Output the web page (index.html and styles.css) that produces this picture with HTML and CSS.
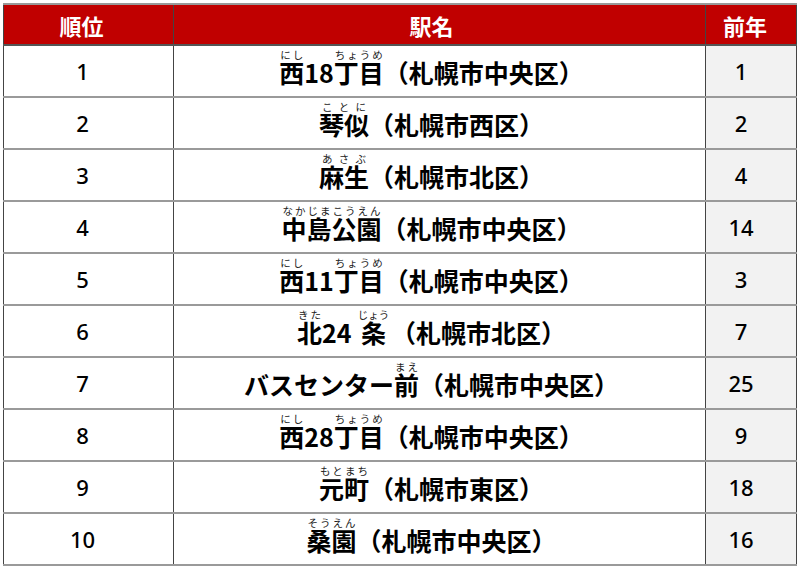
FILE: index.html
```html
<!DOCTYPE html>
<html lang="ja">
<head>
<meta charset="utf-8">
<link rel="stylesheet" href="styles.css">
</head>
<body>
<div class="wrap">
<table class="rank">
<colgroup><col class="w1"><col class="w2"><col class="w3"></colgroup>
<thead>
<tr><th class="c1">順位</th><th class="c2">駅名</th><th class="c3">前年</th></tr>
</thead>
<tbody>
<tr><td class="c1">1</td><td class="c2"><ruby>西<rt>にし</rt></ruby>18<ruby>丁目<rt>ちょうめ</rt></ruby>（札幌市中央区）</td><td class="c3">1</td></tr>
<tr><td class="c1">2</td><td class="c2"><ruby>琴似<rt>ことに</rt></ruby>（札幌市西区）</td><td class="c3">2</td></tr>
<tr><td class="c1">3</td><td class="c2"><ruby>麻生<rt>あさぶ</rt></ruby>（札幌市北区）</td><td class="c3">4</td></tr>
<tr><td class="c1">4</td><td class="c2"><ruby>中島公園<rt>なかじまこうえん</rt></ruby>（札幌市中央区）</td><td class="c3">14</td></tr>
<tr><td class="c1">5</td><td class="c2"><ruby>西<rt>にし</rt></ruby>11<ruby>丁目<rt>ちょうめ</rt></ruby>（札幌市中央区）</td><td class="c3">3</td></tr>
<tr><td class="c1">6</td><td class="c2"><ruby>北<rt>きた</rt></ruby>24 <ruby class="jo">条<rt>じょう</rt></ruby>（札幌市北区）</td><td class="c3">7</td></tr>
<tr><td class="c1">7</td><td class="c2">バスセンター<ruby>前<rt>まえ</rt></ruby>（札幌市中央区）</td><td class="c3">25</td></tr>
<tr><td class="c1">8</td><td class="c2"><ruby>西<rt>にし</rt></ruby>28<ruby>丁目<rt>ちょうめ</rt></ruby>（札幌市中央区）</td><td class="c3">9</td></tr>
<tr><td class="c1">9</td><td class="c2"><ruby>元町<rt>もとまち</rt></ruby>（札幌市東区）</td><td class="c3">18</td></tr>
<tr><td class="c1">10</td><td class="c2"><ruby>桑園<rt>そうえん</rt></ruby>（札幌市中央区）</td><td class="c3">16</td></tr>
</tbody>
</table>
</div>
</body>
</html>
```
FILE: styles.css
```css
html, body {
  margin: 0;
  padding: 0;
  background: #ffffff;
}
.wrap {
  padding: 3px 0 0 3px;
}
.rank {
  border-collapse: collapse;
  width: 793px;
  table-layout: fixed;
  font-family: "Noto Sans CJK JP", "Noto Sans", sans-serif;
  color: #000;
}
.w1 { width: 170px; }
.w2 { width: 532px; }
.w3 { width: 91px; }
.rank th, .rank td {
  box-sizing: border-box;
  padding: 0;
  text-align: center;
  vertical-align: middle;
  border-left: 1px solid #444;
  border-right: 1px solid #444;
  overflow: visible;
}
.rank th {
  background: #c00000;
  color: #fff;
  font-weight: 700;
  font-size: 22px;
  height: 41px;
  line-height: 24px;
  border-top: 2px solid #999;
  border-bottom: 2px solid #555;
}
.rank td {
  height: 52px;
  border-bottom: 2px solid #9a9a9a;
  line-height: 24px;
}
.rank th.c1 { padding-right: 14px; }
.rank th.c2 { padding-right: 16px; }
.rank th.c3 { padding-right: 12px; }
.rank td.c1, .rank td.c3 {
  font-family: "Noto Sans", "Open Sans", sans-serif;
  font-weight: 500;
  font-size: 22px;
  padding-bottom: 1px;
}
.rank td.c1 { padding-right: 12px; }
.rank td.c3 { padding-right: 20px; background: #f2f2f2; }
.rank td.c2 {
  font-weight: 700;
  font-size: 25px;
  padding-right: 16px;
  padding-bottom: 9px;
}
.rank rt {
  font-size: 10.5px;
  font-weight: 400;
  color: #222;
  line-height: 1;
}
.rank ruby.jo {
  padding: 0 5px 0 4px;
}
```
